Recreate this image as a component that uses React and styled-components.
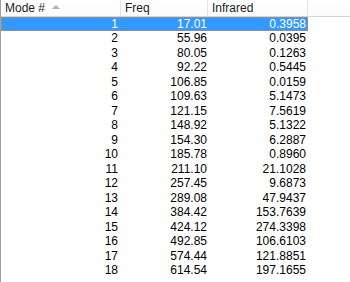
import React from "react";
import styled, { createGlobalStyle } from "styled-components";

const Global = createGlobalStyle`
  html, body { margin: 0; padding: 0; background: #fff; }
  body { width: 350px; height: 282px; overflow: hidden; }
`;

const data = [
  [1, "17.01", "0.3958"],
  [2, "55.96", "0.0395"],
  [3, "80.05", "0.1263"],
  [4, "92.22", "0.5445"],
  [5, "106.85", "0.0159"],
  [6, "109.63", "5.1473"],
  [7, "121.15", "7.5619"],
  [8, "148.92", "5.1322"],
  [9, "154.30", "6.2887"],
  [10, "185.78", "0.8960"],
  [11, "211.10", "21.1028"],
  [12, "257.45", "9.6873"],
  [13, "289.08", "47.9437"],
  [14, "384.42", "153.7639"],
  [15, "424.12", "274.3398"],
  [16, "492.85", "106.6103"],
  [17, "574.44", "121.8851"],
  [18, "614.54", "197.1655"],
];

const cols = "120px 87px 100px 1fr";

const Frame = styled.div`
  width: 350px;
  height: 282px;
  box-sizing: border-box;
  border-left: 1px solid #a0a0a0;
  background: #fff;
  font-family: "Liberation Sans Narrow", "Liberation Sans", Arial, sans-serif;
  font-size: 12px;
  color: #000;
  overflow: hidden;
`;

const Header = styled.div`
  display: grid;
  grid-template-columns: ${cols};
  height: 16px;
  border-bottom: 1px solid #d5d5d5;
  background: linear-gradient(#ffffff, #fbfbfb);
`;

const HeadCell = styled.div`
  position: relative;
  display: flex;
  align-items: center;
  padding-left: ${(p) => p.$pad}px;
  border-right: ${(p) => (p.$last ? "none" : "1px solid #e5e5e5")};
  color: #1e1e1e;
  line-height: 16px;
`;

const SortArrow = styled.span`
  position: absolute;
  left: 51px;
  top: 5px;
  width: 0;
  height: 0;
  border-left: 4px solid transparent;
  border-right: 4px solid transparent;
  border-bottom: 4px solid #a9b2bd;
`;

const Row = styled.div`
  display: grid;
  grid-template-columns: ${cols};
  height: 14.47px;
  line-height: 14.47px;
`;

const Sel = styled.div`
  grid-column: 1 / 4;
  display: grid;
  grid-template-columns: 120px 87px 100px;
  background: ${(p) => (p.$sel ? "#3399ff" : "transparent")};
  color: ${(p) => (p.$sel ? "#fff" : "#000")};
  box-sizing: border-box;
  outline: ${(p) => (p.$sel ? "1px dotted #d88a3a" : "none")};
  outline-offset: -1px;
`;

const Cell = styled.div`
  text-align: right;
  padding-right: ${(p) => p.$pr}px;
  white-space: nowrap;
`;

export default function App() {
  return (
    <>
      <Global />
      <Frame>
        <Header>
          <HeadCell $pad={4}>
            Mode #<SortArrow />
          </HeadCell>
          <HeadCell $pad={4}>Freq</HeadCell>
          <HeadCell $pad={4}>Infrared</HeadCell>
          <HeadCell $last />
        </Header>
        {data.map(([m, f, i], idx) => (
          <Row key={m}>
            <Sel $sel={idx === 0}>
              <Cell $pr={3}>{m}</Cell>
              <Cell $pr={1}>{f}</Cell>
              <Cell $pr={2}>{i}</Cell>
            </Sel>
          </Row>
        ))}
      </Frame>
    </>
  );
}
